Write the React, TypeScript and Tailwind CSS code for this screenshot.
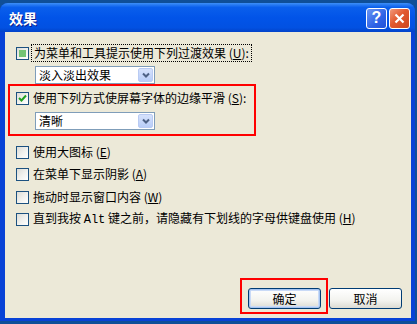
import React from 'react';

const font = { fontFamily: '"Noto Sans CJK SC", "Liberation Sans", sans-serif' };

const CheckBox: React.FC<{ state?: 'off' | 'on' | 'mixed' }> = ({ state = 'off' }) => (
  <div className="w-[13px] h-[13px] shrink-0 border border-[#1c5180] bg-[linear-gradient(135deg,#dcdcd7_0%,#f2f2ef_55%,#ffffff_100%)] flex items-center justify-center">
    {state === 'mixed' && <div className="w-[7px] h-[7px] bg-[#73c373]" />}
    {state === 'on' && (
      <svg width="9" height="9" viewBox="0 0 9 9">
        <path d="M1 4 L3.5 6.5 L8 1.5" fill="none" stroke="#21a121" strokeWidth="2" />
      </svg>
    )}
  </div>
);

const Combo: React.FC<{ value: string }> = ({ value }) => (
  <div className="ml-[30px] w-[120px] h-[18px] bg-white border border-[#7f9db9] flex items-center">
    <span className="flex-1 pl-[3px] text-[12px] leading-none text-black">{value}</span>
    <div className="w-[15px] h-[14px] mr-px rounded-[2px] border border-[#b9cbf3] bg-[linear-gradient(180deg,#d6e2fc_0%,#b8cdf8_100%)] flex items-center justify-center">
      <svg width="8" height="6" viewBox="0 0 8 6">
        <path d="M1 1.5 L4 4.5 L7 1.5" fill="none" stroke="#4d6185" strokeWidth="2" />
      </svg>
    </div>
  </div>
);

const Row: React.FC<{ state?: 'off' | 'on' | 'mixed'; className?: string; children: React.ReactNode }> = ({ state, className = '', children }) => (
  <div className={`flex items-center h-[18px] pl-[11px] ${className}`}>
    <CheckBox state={state} />
    <span className="ml-[4px] text-[12px] leading-none text-black whitespace-nowrap">{children}</span>
  </div>
);

const XpButton: React.FC<{ label: string; isDefault?: boolean }> = ({ label, isDefault }) => (
  <div
    className={`w-[73px] h-[21px] rounded-[3px] border flex items-center justify-center text-[12px] text-black ${
      isDefault
        ? 'border-[#003c74] shadow-[inset_0_0_0_1px_#a6c4f0,inset_0_0_0_2px_#c9daf7] bg-[linear-gradient(180deg,#ffffff_0%,#f3f3ef_60%,#dcdbd3_100%)]'
        : 'border-[#003c74] bg-[linear-gradient(180deg,#ffffff_0%,#f3f3ef_60%,#dcdbd3_100%)]'
    }`}
  >
    {label}
  </div>
);

export default function App() {
  return (
    <div className="w-[417px] h-[324px] bg-[#0f4f98] pt-[3px] overflow-hidden" style={font}>
      <div className="w-[415px] h-[318px] rounded-t-[8px] bg-[#0842d6] flex flex-col overflow-hidden">
        {/* Title bar */}
        <div className="h-[29px] shrink-0 flex items-center pl-[9px] pr-[5px] bg-[linear-gradient(180deg,#3d8ff7_0%,#0a5fec_15%,#0254e8_50%,#0251e2_85%,#0343c9_100%)]">
          <span className="text-white font-bold text-[14px] leading-none [text-shadow:1px_1px_0_#0a1e8c]">效果</span>
          <div className="flex-1" />
          <div className="w-[21px] h-[21px] rounded-[3px] border border-white bg-[linear-gradient(135deg,#6b96f2_0%,#2e62e6_60%,#2152d8_100%)] flex items-center justify-center mt-px">
            <span className="text-white font-bold text-[16px] leading-none" style={{ fontFamily: '"Liberation Sans", sans-serif' }}>?</span>
          </div>
          <div className="ml-[2px] w-[21px] h-[21px] rounded-[3px] border border-white bg-[linear-gradient(135deg,#f19a7d_0%,#e2582e_45%,#cc4620_100%)] flex items-center justify-center mt-px">
            <svg width="11" height="11" viewBox="0 0 11 11">
              <path d="M1.5 1.5 L9.5 9.5 M9.5 1.5 L1.5 9.5" stroke="#ffffff" strokeWidth="2.2" />
            </svg>
          </div>
        </div>

        {/* Client area */}
        <div className="flex-1 ml-[5px] mr-[4px] mb-[3px] bg-[#ece9d8] flex flex-col pl-[3px]">
          <div className="flex items-center h-[18px] mt-[12px] pl-[8px]">
            <CheckBox state="mixed" />
            <span className="ml-[2px] px-[2px] h-[18px] flex items-center border border-dotted border-black text-[12px] leading-none text-black whitespace-nowrap">
              为菜单和工具提示使用下列过渡效果 (<u>U</u>):
            </span>
          </div>
          <div className="mt-[4px] -ml-[3px]">
            <Combo value="淡入淡出效果" />
          </div>

          <div className="mt-0 w-[248px] h-[52px] border-2 border-[#ff0000] flex flex-col -ml-0">
            <div className="flex items-center h-[18px] mt-[3px] pl-[6px]">
              <CheckBox state="on" />
              <span className="ml-[4px] text-[12px] leading-none text-black whitespace-nowrap">
                使用下列方式使屏幕字体的边缘平滑 (<u>S</u>):
              </span>
            </div>
            <div className="mt-[5px] -ml-[5px]">
              <Combo value="清晰" />
            </div>
          </div>

          <div className="-ml-[3px] flex flex-col">
            <Row className="mt-[7px]">使用大图标 (<u>E</u>)</Row>
            <Row className="mt-[4px]">在菜单下显示阴影 (<u>A</u>)</Row>
            <Row className="mt-[5px]">拖动时显示窗口内容 (<u>W</u>)</Row>
            <Row className="mt-[4px]">
              直到我按 <span style={{ fontFamily: '"Liberation Mono", monospace' }}>Alt</span> 键之前，请隐藏有下划线的字母供键盘使用 (<u>H</u>)
            </Row>
          </div>

          <div className="flex-1" />

          <div className="flex justify-end gap-[8px] pr-[9px] mb-[9px]">
            <div className="relative">
              <XpButton label="确定" isDefault />
              <div className="absolute -left-[8px] -top-[10px] w-[88px] h-[36px] border-2 border-[#ff0000] pointer-events-none" />
            </div>
            <XpButton label="取消" />
          </div>
        </div>
      </div>
    </div>
  );
}
